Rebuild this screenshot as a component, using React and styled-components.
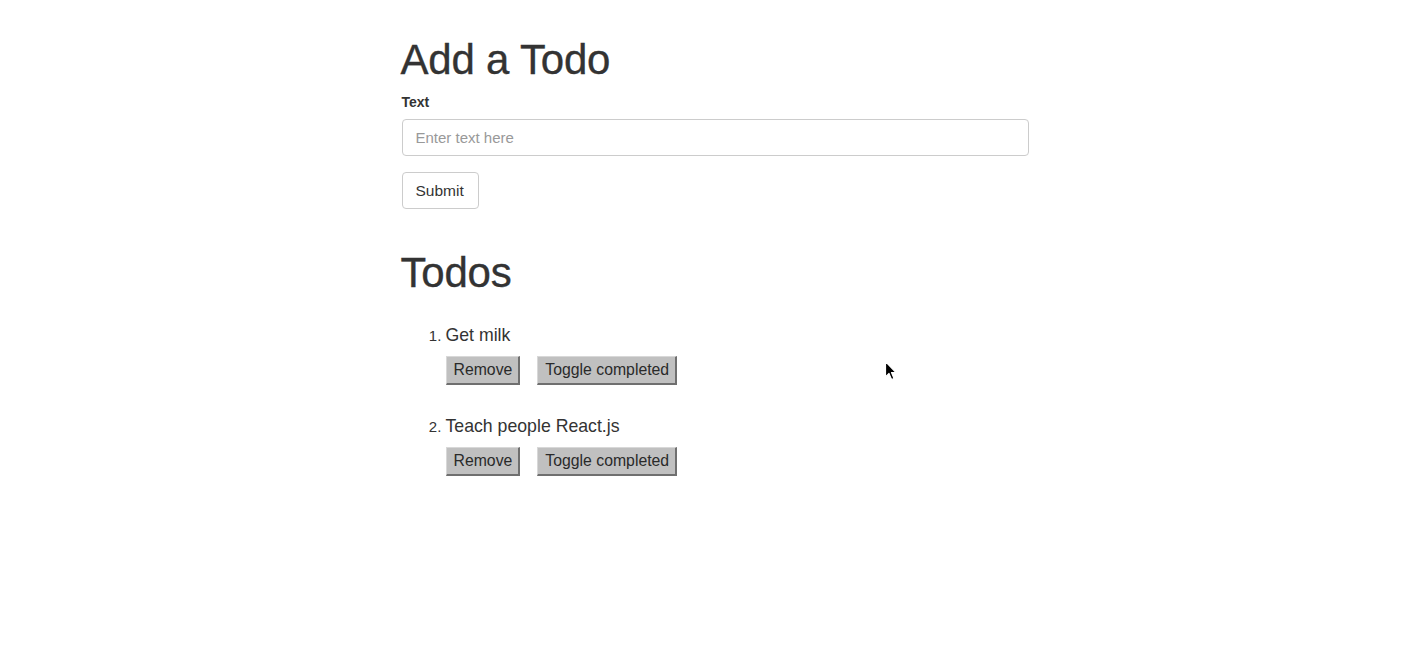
import React, { useState } from "react";
import styled, { createGlobalStyle } from "styled-components";

const GlobalStyle = createGlobalStyle`
  body {
    margin: 0;
    background: #fff;
    font-family: "Liberation Sans", Arial, sans-serif;
    color: #333;
  }
`;

const Page = styled.div`
  position: relative;
  min-height: 670px;
`;

const Container = styled.div`
  width: 627px;
  margin: 0 auto;
  padding: 31px 4px 0 9px;
`;

const Title = styled.h1`
  font-size: 42px;
  font-weight: 500;
  line-height: 1.1;
  margin: 6px 0 11px -1px;
  letter-spacing: -0.2px;
  -webkit-text-stroke: 0.35px #333;
`;

const Label = styled.label`
  display: block;
  font-size: 14px;
  font-weight: 700;
  margin-bottom: 9px;
`;

const Input = styled.input`
  box-sizing: border-box;
  width: 100%;
  height: 37px;
  padding: 6px 13px;
  font-family: inherit;
  font-size: 15px;
  color: #555;
  border: 1px solid #ccc;
  border-radius: 4px;
  outline: none;

  &::placeholder {
    color: #999;
  }
`;

const SubmitBtn = styled.button`
  display: block;
  margin-top: 16px;
  height: 37px;
  padding: 0 14px 0 13px;
  font-family: inherit;
  font-size: 15.5px;
  color: #333;
  background: #fff;
  border: 1px solid #ccc;
  border-radius: 4px;
  cursor: pointer;
`;

const SectionTitle = styled(Title)`
  margin-top: 41px;
  margin-bottom: 28px;
`;

const List = styled.ol`
  margin: 0;
  padding-left: 44px;
`;

const Item = styled.li`
  font-size: 17.7px;
  margin-bottom: 30px;

  &::marker {
    font-size: 15px;
  }
`;

const ItemText = styled.span`
  display: block;
  line-height: 22px;
`;

const Actions = styled.div`
  display: flex;
  gap: 17px;
  margin-top: 10px;
`;

const GrayBtn = styled.button`
  height: 29px;
  padding: 0 6px 0 7px;
  font-family: inherit;
  font-size: 15.8px;
  color: #2a2a2a;
  background: #c0c0c0;
  border-style: solid;
  border-width: 1px 2px 2px 1px;
  border-color: #d8d8d8 #6f6f6f #6f6f6f #d8d8d8;
  border-radius: 0;
  cursor: pointer;
`;

const Cursor = styled.svg`
  position: absolute;
  left: 884px;
  top: 360px;
`;

const App = () => {
  const [todos] = useState([
    { id: 1, text: "Get milk" },
    { id: 2, text: "Teach people React.js" },
  ]);

  return (
    <Page>
      <GlobalStyle />
      <Container>
        <Title>Add a Todo</Title>
        <Label>Text</Label>
        <Input type="text" placeholder="Enter text here" />
        <SubmitBtn type="submit">Submit</SubmitBtn>

        <SectionTitle>Todos</SectionTitle>
        <List>
          {todos.map((todo) => (
            <Item key={todo.id}>
              <ItemText>{todo.text}</ItemText>
              <Actions>
                <GrayBtn>Remove</GrayBtn>
                <GrayBtn>Toggle completed</GrayBtn>
              </Actions>
            </Item>
          ))}
        </List>
      </Container>
      <Cursor width="14" height="22" viewBox="0 0 14 22">
        <path
          d="M1.5 1.5 L1.5 17 L5 13.5 L7.5 19.5 L10 18.5 L7.5 12.5 L12 12.5 Z"
          fill="#000"
          stroke="#fff"
          strokeWidth="1.2"
          strokeLinejoin="round"
        />
      </Cursor>
    </Page>
  );
};

export default App;
